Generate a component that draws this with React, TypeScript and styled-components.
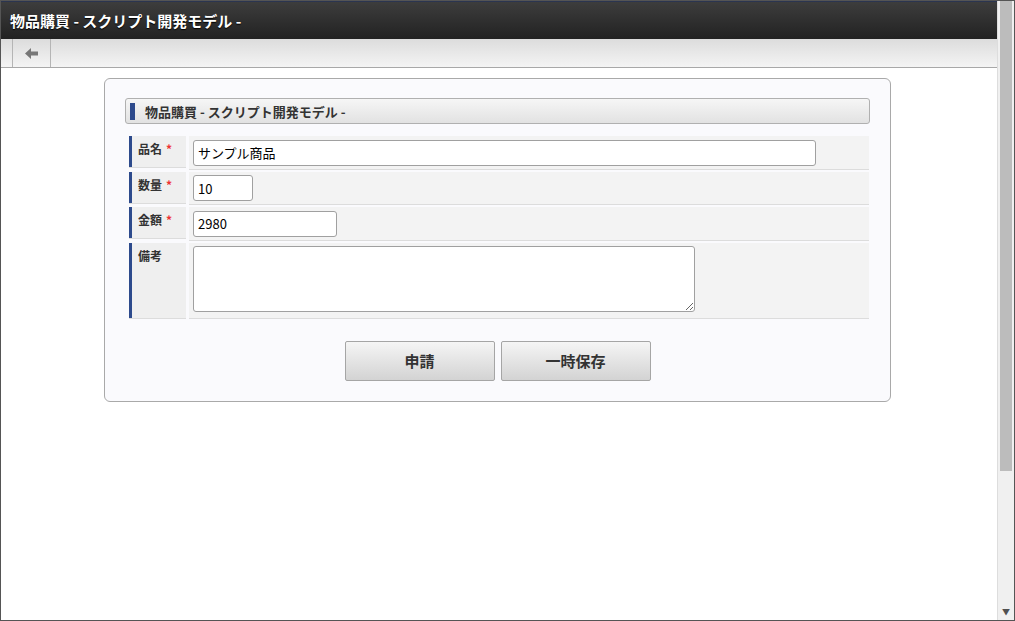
import styled, { createGlobalStyle } from 'styled-components';

const GlobalStyle = createGlobalStyle`
  html, body { margin: 0; padding: 0; height: 100%; }
  body { font-family: Meiryo, "Noto Sans CJK JP", "Liberation Sans", sans-serif; }
`;

const Frame = styled.div`
  width: 1015px;
  height: 621px;
  box-sizing: border-box;
  border: 1px solid #555;
  display: flex;
  overflow: hidden;
  background: #fff;
`;

const Page = styled.div`
  flex: 1;
  display: flex;
  flex-direction: column;
`;

const Header = styled.div`
  height: 37px;
  border-top: 1px solid #2b3550;
  background: linear-gradient(#3d3d3d, #222);
  color: #fff;
  font-weight: bold;
  font-size: 15px;
  display: flex;
  align-items: center;
  padding-left: 9px;
  text-shadow: 0 1px 1px #000;
`;

const Toolbar = styled.div`
  height: 28px;
  background: linear-gradient(#dcdcdc, #f4f4f4);
  border-bottom: 1px solid #a8a8a8;
  display: flex;
  padding-left: 11px;
`;

const BackButton = styled.div`
  width: 37px;
  border-left: 1px solid #b5b5b5;
  border-right: 1px solid #b5b5b5;
  display: flex;
  align-items: center;
  justify-content: center;
`;

const Body = styled.div`
  padding: 10px 0 0 103px;
`;

const Card = styled.div`
  width: 787px;
  box-sizing: border-box;
  border: 1px solid #a9a9a9;
  border-radius: 6px;
  background: #fafafd;
  padding: 19px 20px 20px 20px;
`;

const SectionTitle = styled.div`
  height: 26px;
  box-sizing: border-box;
  border: 1px solid #b0b0b0;
  border-radius: 3px;
  background: linear-gradient(#f6f6f6, #e2e2e2);
  display: flex;
  align-items: center;
  font-size: 13px;
  font-weight: bold;
  color: #333;
  padding-left: 4px;
  &::before {
    content: '';
    width: 5px;
    height: 17px;
    background: #2d4a8c;
    margin-right: 10px;
  }
`;

const Table = styled.div`
  margin: 12px 1px 0 4px;
  display: grid;
  grid-template-columns: 57px 1fr;
  row-gap: 3px;
  column-gap: 3px;
`;

const Label = styled.div<{ $h: number }>`
  height: ${p => p.$h}px;
  background: #efefef;
  border-left: 3px solid #2d4a8c;
  box-sizing: border-box;
  padding: 4px 0 0 6px;
  font-size: 12px;
  font-weight: bold;
  color: #333;
  box-shadow: 0 1px 0 #dcdcdc;
`;

const Req = styled.span`
  color: #e33;
  margin-left: 4px;
`;

const Cell = styled.div`
  background: #f3f3f3;
  padding: 3px 4px;
  box-shadow: 0 1px 0 #dcdcdc;
`;

const Input = styled.input<{ $w: number }>`
  width: ${p => p.$w}px;
  height: 26px;
  box-sizing: border-box;
  border: 1px solid #a0a0a0;
  border-radius: 3px;
  font-family: Meiryo, "Noto Sans CJK JP", "Liberation Sans", sans-serif;
  font-size: 13px;
  padding: 0 4px;
  background: #fff;
  color: #000;
`;

const Area = styled.textarea`
  width: 502px;
  height: 66px;
  box-sizing: border-box;
  border: 1px solid #a0a0a0;
  border-radius: 3px;
  display: block;
`;

const Buttons = styled.div`
  display: flex;
  justify-content: center;
  gap: 6px;
  margin-top: 23px;
`;

const Button = styled.div`
  width: 150px;
  height: 40px;
  box-sizing: border-box;
  border: 1px solid #a5a5a5;
  border-radius: 2px;
  background: linear-gradient(#f5f5f5, #d3d3d3);
  display: flex;
  align-items: center;
  justify-content: center;
  font-size: 15px;
  font-weight: bold;
  color: #333;
`;

const Scrollbar = styled.div`
  width: 16px;
  background: #f0f0f0;
  border-left: 1px solid #ddd;
  display: flex;
  flex-direction: column;
  align-items: center;
`;

const Thumb = styled.div`
  width: 12px;
  height: 470px;
  background: #bcbcbc;
`;

const Arrow = styled.div`
  margin-top: auto;
  margin-bottom: 3px;
  font-size: 8px;
  color: #505050;
`;

export default function App() {
  return (
    <Frame>
      <GlobalStyle />
      <Page>
        <Header>物品購買 - スクリプト開発モデル -</Header>
        <Toolbar>
          <BackButton>
            <svg width="13" height="11" viewBox="0 0 13 11">
              <path d="M0 5.5 L6 0 V3.5 H13 V7.5 H6 V11 Z" fill="#777" />
            </svg>
          </BackButton>
        </Toolbar>
        <Body>
          <Card>
            <SectionTitle>物品購買 - スクリプト開発モデル -</SectionTitle>
            <Table>
              <Label $h={31}>品名<Req>*</Req></Label>
              <Cell><Input $w={623} defaultValue="サンプル商品" /></Cell>
              <Label $h={31}>数量<Req>*</Req></Label>
              <Cell><Input $w={60} defaultValue="10" /></Cell>
              <Label $h={31}>金額<Req>*</Req></Label>
              <Cell><Input $w={144} defaultValue="2980" /></Cell>
              <Label $h={75}>備考</Label>
              <Cell><Area /></Cell>
            </Table>
            <Buttons>
              <Button>申請</Button>
              <Button>一時保存</Button>
            </Buttons>
          </Card>
        </Body>
      </Page>
      <Scrollbar>
        <Thumb />
        <Arrow>▼</Arrow>
      </Scrollbar>
    </Frame>
  );
}
